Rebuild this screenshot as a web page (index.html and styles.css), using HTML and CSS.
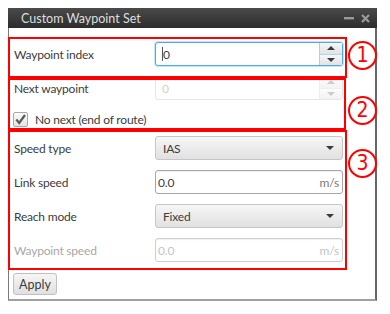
FILE: index.html
```html
<!DOCTYPE html>
<html>
<head>
  <title>Custom Waypoint Set</title>
  <link rel="stylesheet" href="styles.css">
</head>
<body>
  <div class="window">
    <div class="titlebar">
      <span class="title">Custom Waypoint Set</span>
      <span class="controls">
        <svg width="10" height="10" viewBox="0 0 10 10"><rect x="0" y="4" width="10" height="2.4" fill="#9a9a9a"/></svg>
        <svg width="9" height="9" viewBox="0 0 9 9"><path d="M1 1 L8 8 M8 1 L1 8" stroke="#9a9a9a" stroke-width="2.2"/></svg>
      </span>
    </div>

    <div class="content">
      <div class="form">
        <div class="row">
          <span class="label">Waypoint index</span>
          <div class="spin focus">
            <span class="value"><span class="caret"></span>0</span>
            <div class="spin-btns">
              <span class="spin-btn"><span class="tri-up"></span></span>
              <span class="spin-btn"><span class="tri-down"></span></span>
            </div>
          </div>
        </div>

        <div class="row">
          <span class="label">Next waypoint</span>
          <div class="spin disabled">
            <span class="value">0</span>
            <div class="spin-btns">
              <span class="spin-btn"><span class="tri-up"></span></span>
              <span class="spin-btn"><span class="tri-down"></span></span>
            </div>
          </div>
        </div>

        <div class="row check-row">
          <span class="checkbox">
            <svg width="13" height="13" viewBox="0 0 13 13"><path d="M2.3 6.6 L5.2 9.9 L11 2" fill="none" stroke="#5a5a5a" stroke-width="2.2"/></svg>
          </span>
          <span class="check-label">No next (end of route)</span>
        </div>

        <div class="row">
          <span class="label">Speed type</span>
          <div class="combo"><span class="value">IAS</span><span class="tri-down"></span></div>
        </div>

        <div class="row">
          <span class="label">Link speed</span>
          <div class="field"><span class="value">0.0</span><span class="unit">m/s</span></div>
        </div>

        <div class="row">
          <span class="label">Reach mode</span>
          <div class="combo"><span class="value">Fixed</span><span class="tri-down"></span></div>
        </div>

        <div class="row">
          <span class="label muted">Waypoint speed</span>
          <div class="field disabled"><span class="value">0.0</span><span class="unit">m/s</span></div>
        </div>
      </div>

      <button class="apply">Apply</button>
    </div>

    <!-- annotation marks drawn over the dialog -->
    <div class="mark mark-1"></div>
    <div class="mark mark-2"></div>
    <div class="mark mark-3"></div>
    <span class="badge badge-1">1</span>
    <span class="badge badge-2">2</span>
    <span class="badge badge-3">3</span>
  </div>
</body>
</html>
```

FILE: styles.css
```css
body {
  margin: 0;
  background-color: #ffffff;
  font-family: Lato, "Open Sans", sans-serif;
  font-size: 12px;
  letter-spacing: -0.2px;
  color: #3c3c3c;
}

.window {
  position: relative;
  width: 369px;
  margin: 8px 0 0 8px;
}

.titlebar {
  height: 20px;
  display: flex;
  align-items: center;
  justify-content: space-between;
  padding: 0 7px 0 13px;
  background: linear-gradient(#4a4a4a, #2c2c2c);
}

.title {
  color: #dedede;
  font-size: 12.5px;
  letter-spacing: 0;
}

.controls {
  display: flex;
  align-items: center;
  gap: 7px;
}

.content {
  border-left: 1px solid #7a7a7a;
  border-right: 2px solid #666666;
  border-bottom: 2px solid #a0a0a0;
  padding: 14px 0 4px 4px;
}

.form {
  display: flex;
  flex-direction: column;
  gap: 10px;
}

.row {
  display: grid;
  grid-template-columns: 142px 188px;
  align-items: center;
  height: 24px;
}

.label {
  padding-left: 1px;
}

.label.muted {
  color: #a8a8a8;
}

.check-row {
  display: flex;
  height: 22px;
  margin: -2px 0 -4px 0;
  gap: 7px;
}

.checkbox {
  width: 15px;
  height: 15px;
  box-sizing: border-box;
  border: 1px solid #a9a9a9;
  border-radius: 2px;
  background: linear-gradient(#fbfbfb, #e4e4e4);
  display: flex;
  align-items: center;
  justify-content: center;
}

.spin,
.field,
.combo {
  box-sizing: border-box;
  height: 24px;
  border: 1px solid #b4b4b4;
  border-radius: 3px;
  display: flex;
  align-items: center;
  background-color: #ffffff;
  position: relative;
}

.spin .value {
  flex: 1;
  padding-left: 6px;
  display: flex;
  align-items: center;
}

.caret {
  width: 1px;
  height: 14px;
  background-color: #555555;
}

.spin.focus {
  border-color: #4aaee2;
  box-shadow: 0 0 0 1px #c4e6f7;
}

.spin.disabled {
  border-color: #e6e6e6;
  color: #cfcfcf;
}

.spin-btns {
  width: 22px;
  align-self: stretch;
  display: flex;
  flex-direction: column;
  border-left: 1px solid #9fd3ee;
}

.spin-btn {
  flex: 1;
  display: flex;
  align-items: center;
  justify-content: center;
  background: linear-gradient(#f7f7f7, #e2e2e2);
}

.spin-btn + .spin-btn {
  border-top: 1px solid #a8d7ef;
}

.spin.disabled .spin-btns {
  border-left-color: #eeeeee;
}

.spin.disabled .spin-btn {
  background: linear-gradient(#fcfcfc, #f3f3f3);
}

.spin.disabled .spin-btn + .spin-btn {
  border-top-color: #eeeeee;
}

.tri-up,
.tri-down {
  width: 0;
  height: 0;
  border-left: 4px solid transparent;
  border-right: 4px solid transparent;
}

.tri-up {
  border-bottom: 4px solid #3a3a3a;
}

.tri-down {
  border-top: 4px solid #3a3a3a;
}

.spin.disabled .tri-up {
  border-bottom-color: #cccccc;
}

.spin.disabled .tri-down {
  border-top-color: #cccccc;
}

.combo {
  border-color: #c6c6c6;
  background: linear-gradient(#f6f6f6, #e1e1e1);
  justify-content: space-between;
  padding: 0 8px 0 7px;
}

.field {
  justify-content: space-between;
  padding: 0 3px 0 2px;
  border-color: #a6a6a6;
  box-shadow: inset 0 1px 1px rgba(0, 0, 0, 0.06);
}

.unit {
  color: #7a7a7a;
}

.field.disabled {
  border-color: #cfcfcf;
  color: #c4c4c4;
}

.field.disabled .unit {
  color: #c4c4c4;
}

.apply {
  margin-top: 11px;
  width: 44px;
  height: 22px;
  padding: 0;
  font-family: Lato, "Open Sans", sans-serif;
  font-size: 12.5px;
  color: #3c3c3c;
  border: 1px solid #c0c0c0;
  border-radius: 3px;
  background: linear-gradient(#f6f6f6, #e0e0e0);
}

.mark {
  position: absolute;
  left: 0;
  box-sizing: border-box;
  border: 2px solid #ff0000;
}

.mark-1 {
  top: 29px;
  width: 339px;
  height: 41px;
}

.mark-2 {
  top: 70px;
  width: 338px;
  height: 52px;
}

.mark-3 {
  top: 122px;
  width: 339px;
  height: 140px;
}

.badge {
  position: absolute;
  left: 340px;
  width: 29px;
  height: 29px;
  box-sizing: border-box;
  border: 2px solid #ff0000;
  border-radius: 50%;
  background-color: #ffffff;
  color: #ff0000;
  font-family: "DejaVu Sans Condensed", "DejaVu Sans", sans-serif;
  font-size: 21px;
  line-height: 25px;
  text-align: center;
}

.badge-1 {
  top: 33px;
}

.badge-2 {
  top: 88px;
}

.badge-3 {
  top: 141px;
}
```
